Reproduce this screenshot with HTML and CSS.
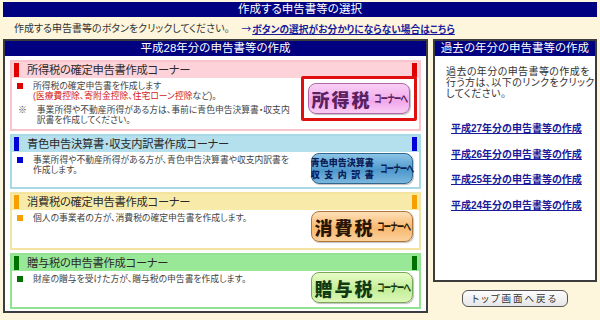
FILE: index.html
```html
<!DOCTYPE html>
<html lang="ja">
<head>
<meta charset="utf-8">
<link rel="stylesheet" href="styles.css">
</head>
<body>
<div class="page">
  <div class="topbar">作成する申告書等の選択</div>
  <div class="intro">
    <span class="intro-text">作成する申告書等のボタンをクリックしてください。</span>
    <a class="intro-link" href="#"><span class="arrow">→</span><u>ボタンの選択がお分かりにならない場合はこちら</u></a>
  </div>
  <div class="main">
    <div class="box box-left">
      <div class="box-head">平成28年分の申告書等の作成</div>
      <div class="sections">
        <div class="sec sec-pink sec-1">
          <div class="sec-head"><span class="mark"></span><span class="sec-title">所得税の確定申告書作成コーナー</span><span class="mark mark-r"></span></div>
          <div class="sec-body">
            <div class="sec-text">
              <div class="item"><span class="dot"></span><div><p>所得税の確定申告書を作成します</p><p><span class="red">(医療費控除、寄附金控除、住宅ローン控除</span>など)。</p></div></div>
              <p class="note"><span class="kome">※</span><span>事業所得や不動産所得がある方は、事前に青色申告決算書・収支内訳書を作成してください。</span></p>
            </div>
            <div class="btn-frame">
              <a class="cbtn cbtn-pink" href="#"><span class="big">所得税</span><span class="small">コーナーへ</span></a>
            </div>
          </div>
        </div>
        <div class="sec sec-blue sec-2">
          <div class="sec-head"><span class="mark"></span><span class="sec-title">青色申告決算書･収支内訳書作成コーナー</span><span class="mark mark-r"></span></div>
          <div class="sec-body">
            <div class="sec-text">
              <p class="item"><span class="dot"></span><span>事業所得や不動産所得がある方が、青色申告決算書や収支内訳書を作成します。</span></p>
            </div>
            <a class="cbtn cbtn-blue" href="#"><span class="two"><span>青色申告決算書</span><span class="spread">収支内訳書</span></span><span class="small">コーナーへ</span></a>
          </div>
        </div>
        <div class="sec sec-yellow sec-3">
          <div class="sec-head"><span class="mark"></span><span class="sec-title">消費税の確定申告書作成コーナー</span><span class="mark mark-r"></span></div>
          <div class="sec-body">
            <div class="sec-text">
              <p class="item"><span class="dot"></span><span>個人の事業者の方が、消費税の確定申告書を作成します。</span></p>
            </div>
            <a class="cbtn cbtn-orange" href="#"><span class="big">消費税</span><span class="small">コーナーへ</span></a>
          </div>
        </div>
        <div class="sec sec-green sec-4">
          <div class="sec-head"><span class="mark"></span><span class="sec-title">贈与税の申告書作成コーナー</span><span class="mark mark-r"></span></div>
          <div class="sec-body">
            <div class="sec-text">
              <p class="item"><span class="dot"></span><span>財産の贈与を受けた方が、贈与税の申告書を作成します。</span></p>
            </div>
            <a class="cbtn cbtn-green" href="#"><span class="big">贈与税</span><span class="small">コーナーへ</span></a>
          </div>
        </div>
      </div>
    </div>
    <div class="right-col">
      <div class="box box-right">
        <div class="box-head">過去の年分の申告書等の作成</div>
        <div class="past-text"><p>過去の年分の申告書等の作成を</p><p>行う方は、以下のリンクをクリック</p><p>してください。</p></div>
        <ul class="past-links">
          <li><a href="#">平成27年分の申告書等の作成</a></li>
          <li><a href="#">平成26年分の申告書等の作成</a></li>
          <li><a href="#">平成25年分の申告書等の作成</a></li>
          <li><a href="#">平成24年分の申告書等の作成</a></li>
        </ul>
      </div>
      <div class="back-wrap"><a class="back-btn" href="#">トップ画面へ戻る</a></div>
    </div>
  </div>
</div>
</body>
</html>
```
FILE: styles.css
```css
* { box-sizing: border-box; }
html, body { margin: 0; padding: 0; }
body {
  background: #fdf5dc;
  font-family: "Liberation Sans", "Noto Sans CJK JP", sans-serif;
  font-feature-settings: "palt";
  color: #333;
  width: 600px;
  height: 320px;
  overflow: hidden;
}
p { margin: 0; }
.page { padding: 2px 3px 0 3px; }
.topbar {
  background: #000080;
  color: #fff;
  text-align: center;
  font-size: 11.5px;
  line-height: 15px;
  height: 15px;
}
.intro {
  display: flex;
  gap: 12px;
  padding: 5px 0 0 11px;
  height: 22px;
  font-size: 10px;
  line-height: 14px;
  white-space: nowrap;
}
.intro-link { color: #1a1a9a; text-decoration: none; font-weight: bold; font-size: 9.7px; }
.intro-link .arrow { font-family: "Noto Sans CJK JP", sans-serif; font-weight: normal; font-feature-settings: normal; margin-right: 1px; }
.intro-link u { text-decoration: underline; }
.main { display: flex; gap: 5px; }
.box {
  border: 2px solid #3c3c3c;
  background: #fff;
}
.box-head {
  background: #000080;
  color: #fff;
  text-align: center;
  font-size: 11.5px;
  line-height: 15px;
  height: 15px;
}
.box-left { width: 425px; height: 274px; }
.sections {
  display: flex;
  flex-direction: column;
  gap: 3px;
  padding: 4px 5px 0 5px;
}
.sec { border: 2px solid; }
.sec-1 { height: 71px; }
.sec-2 { height: 55px; }
.sec-3 { height: 58px; }
.sec-4 { height: 56px; }
.sec-head {
  display: flex;
  align-items: center;
  height: 16px;
  padding: 0 2px;
}
.mark { width: 5px; height: 14px; display: inline-block; flex: none; }
.mark-r { margin-left: auto; }
.sec-title { font-size: 11.3px; line-height: 16px; margin-left: 8px; color: #2a2a2a; letter-spacing: -0.3px; }
.sec-body {
  display: flex;
  justify-content: space-between;
  padding: 0 6px 0 5px;
}
.sec-text { font-size: 8.8px; line-height: 10px; color: #444; padding-top: 3px; width: 280px; }
.item { display: flex; }
.dot { width: 6px; height: 6px; flex: none; margin: 2px 10px 0 0; }
.note { display: flex; margin-top: 4px; padding-left: 1px; }
.kome { margin-right: 10px; flex: none; }
.red { color: #d42020; }

.sec-pink { border-color: #f9c4cc; }
.sec-pink .sec-head { background: #fdd2d9; }
.sec-pink .mark, .sec-pink .dot { background: #e00000; }
.sec-blue { border-color: #a9d8e6; }
.sec-blue .sec-head { background: #b4dfec; }
.sec-blue .mark, .sec-blue .dot { background: #0000d8; }
.sec-yellow { border-color: #f4e4a0; }
.sec-yellow .sec-head { background: #f8eaa8; }
.sec-yellow .mark, .sec-yellow .dot { background: #f5a000; }
.sec-green { border-color: #92e292; }
.sec-green .sec-head { background: #98e898; }
.sec-green .mark, .sec-green .dot { background: #007000; }

.btn-frame {
  flex: none;
  border: 3px solid #e01010;
  padding: 4px 4px 3px 4px;
  margin: -2px -4px 0 0;
  height: 45px;
  border-radius: 2px;
}
.sec-body > .cbtn { margin-top: 1px; }
.cbtn {
  flex: none;
  display: flex;
  align-items: center;
  justify-content: center;
  gap: 3px;
  width: 102px;
  height: 31px;
  border-radius: 8px;
  text-decoration: none;
  white-space: nowrap;
  box-shadow: 1px 1px 1px rgba(0,0,0,0.25);
  font-family: "Noto Sans CJK JP", sans-serif;
  font-feature-settings: normal;
}
.cbtn .big { font-size: 18px; font-weight: 900; letter-spacing: 2px; line-height: 1; margin-right: -1px; }
.cbtn .small { display: inline-block; width: 33px; font-size: 11.5px; font-weight: bold; letter-spacing: -1.5px; line-height: 1; transform: scaleX(0.66); transform-origin: left center; }
.cbtn-pink { background: linear-gradient(#f8d0f4, #f2a8ec 60%, #f9ccf4); border: 1px solid #b068a8; color: #5a2060; }
.cbtn-blue { background: linear-gradient(#8cc4e6, #4e98cc 55%, #7ab6de); border: 1px solid #30688e; color: #0a1e5a; gap: 2px; }
.cbtn-orange { background: linear-gradient(#fde0b8, #f8b86e 55%, #fbd09c); border: 1px solid #b07838; color: #2a1404; }
.cbtn-green { background: linear-gradient(#e8fcc8, #c2ee98 55%, #dcf8b8); border: 1px solid #78a858; color: #123a12; }
.two { display: flex; flex-direction: column; font-size: 9px; font-weight: 900; line-height: 12px; }
.spread { letter-spacing: 4.5px; }

.right-col { display: flex; flex-direction: column; }
.box-right { width: 164px; height: 243px; }
.past-text { font-size: 10px; line-height: 11px; padding: 10px 4px 0 11px; color: #333; letter-spacing: 0.4px; white-space: nowrap; }
.past-links { list-style: none; margin: 24px 0 0 0; padding: 0 0 0 16px; }
.past-links li { font-size: 10px; line-height: 12px; height: 25.5px; }
.past-links a { color: #1a1a9a; font-weight: bold; }
.back-wrap { display: flex; justify-content: center; padding: 8px 0 0 0; }
.back-btn {
  display: block;
  width: 106px;
  height: 17px;
  border: 1px solid #555;
  border-radius: 6px;
  background: linear-gradient(#fdfdfd, #e6e6e6);
  color: #333;
  font-size: 9.5px;
  line-height: 15px;
  text-align: center;
  letter-spacing: 2px;
  text-decoration: none;
}
```
